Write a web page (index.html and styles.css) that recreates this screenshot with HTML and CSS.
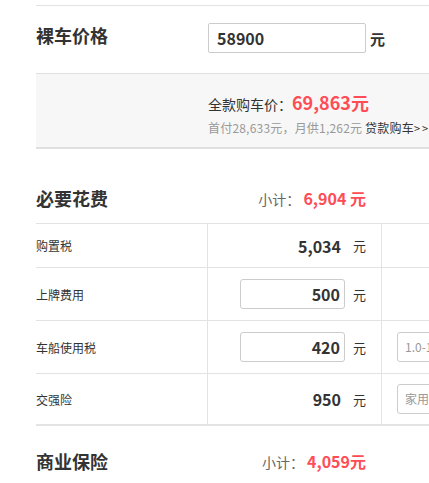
FILE: index.html
```html
<!DOCTYPE html>
<html>
<head>
    <title>购车计算器</title>
    <link rel="stylesheet" href="styles.css">
</head>
<body>
    <div id="calc">
        <div class="price-row">
            <div class="price-label">裸车价格</div>
            <div class="price-value">
                <input class="price-input" type="text" value="58900">
                <span class="unit-big">元</span>
            </div>
        </div>
        <div class="summary">
            <div class="summary-total">全款购车价：<span class="red-big">69,863元</span></div>
            <div class="summary-loan">首付28,633元，月供1,262元 <a class="loan-link">贷款购车<span class="arrows">&gt;&gt;</span></a></div>
        </div>

        <div class="section-head">
            <div class="section-title">必要花费</div>
            <div class="subtotal">小计： <span class="red">6,904 元</span></div>
        </div>
        <div class="fee-table">
            <div class="fee-row row-short">
                <div class="fee-name">购置税</div>
                <div class="fee-value"><span class="num">5,034</span><span class="unit">元</span></div>
                <div class="fee-extra"></div>
            </div>
            <div class="fee-row">
                <div class="fee-name">上牌费用</div>
                <div class="fee-value"><input class="fee-input" type="text" value="500"><span class="unit">元</span></div>
                <div class="fee-extra"></div>
            </div>
            <div class="fee-row">
                <div class="fee-name">车船使用税</div>
                <div class="fee-value"><input class="fee-input" type="text" value="420"><span class="unit">元</span></div>
                <div class="fee-extra"><div class="select-box">1.0-1.6L(含)</div></div>
            </div>
            <div class="fee-row row-last">
                <div class="fee-name">交强险</div>
                <div class="fee-value"><span class="num">950</span><span class="unit">元</span></div>
                <div class="fee-extra"><div class="select-box">家用6座以下</div></div>
            </div>
        </div>

        <div class="section-head section-low">
            <div class="section-title">商业保险</div>
            <div class="subtotal">小计： <span class="red">4,059元</span></div>
        </div>
    </div>
</body>
</html>
```

FILE: styles.css
```css
body {
    margin: 0;
    padding: 0;
    overflow: hidden;
    background-color: #fff;
    color: #333;
    font-family: "Noto Sans CJK SC", "Open Sans", sans-serif;
}
#calc {
    width: 600px;
    margin-left: 36px;
    padding-top: 5px;
}
.price-row {
    display: flex;
    align-items: flex-start;
    height: 67px;
    border-top: 1px solid #e3e3e3;
}
.price-label {
    width: 172px;
    margin-top: 18px;
    font-size: 18px;
    font-weight: bold;
    line-height: 22px;
}
.price-value {
    display: flex;
    align-items: center;
    margin-top: 17px;
}
.price-input {
    box-sizing: border-box;
    width: 158px;
    height: 30px;
    border: 1px solid #ccc;
    border-radius: 2px;
    padding: 0 8px;
    font-family: inherit;
    font-size: 16px;
    font-weight: bold;
    color: #333;
    outline: none;
}
.unit-big {
    margin-left: 4px;
    font-size: 15px;
    font-weight: bold;
}
.summary {
    background-color: #f7f7f7;
    border-top: 1px solid #e0e0e0;
    border-bottom: 2px solid #e0e0e0;
    height: 76px;
    padding-left: 172px;
    box-sizing: border-box;
    padding-top: 15px;
}
.summary-total {
    font-size: 14px;
    line-height: 26px;
    white-space: nowrap;
}
.red-big {
    color: #ff4c55;
    font-size: 18px;
    font-weight: bold;
}
.summary-loan {
    font-size: 12px;
    letter-spacing: 0.2px;
    color: #999;
    line-height: 22px;
    white-space: nowrap;
}
.loan-link {
    color: #333;
}
.arrows {
    letter-spacing: 2px;
    font-size: 11px;
}
.section-head {
    display: flex;
    align-items: center;
    width: 330px;
    justify-content: space-between;
    margin-top: 34px;
    height: 30px;
    margin-bottom: 10px;
}
.section-low {
    margin-top: 20px;
}
.section-title {
    font-size: 18px;
    font-weight: bold;
}
.subtotal {
    font-size: 14px;
    color: #666;
}
.red {
    color: #ff4c55;
    font-size: 16px;
    font-weight: bold;
}
.fee-table {
    border-top: 1px solid #e3e3e3;
    border-bottom: 2px solid #e3e3e3;
}
.fee-row {
    display: flex;
    height: 52px;
    border-top: 1px solid #e3e3e3;
}
.fee-row:first-child {
    border-top: none;
}
.row-short {
    height: 43px;
}
.row-last {
    height: 50px;
}
.fee-name {
    width: 171px;
    display: flex;
    align-items: center;
    font-size: 12px;
}
.fee-value {
    width: 158px;
    padding-right: 15px;
    display: flex;
    align-items: center;
    justify-content: flex-end;
    border-left: 1px solid #e3e3e3;
    border-right: 1px solid #e3e3e3;
}
.num {
    font-size: 16px;
    font-weight: bold;
    margin-right: 4px;
}
.unit {
    font-size: 13px;
    margin-left: 8px;
}
.fee-input {
    box-sizing: border-box;
    width: 105px;
    height: 30px;
    border: 1px solid #ccc;
    border-radius: 3px;
    padding: 0 4px;
    text-align: right;
    font-family: inherit;
    font-size: 16px;
    font-weight: bold;
    color: #333;
    outline: none;
}
.fee-extra {
    flex: 1;
    display: flex;
    align-items: center;
    padding-left: 15px;
}
.select-box {
    box-sizing: border-box;
    width: 140px;
    height: 30px;
    line-height: 28px;
    border: 1px solid #ccc;
    border-radius: 3px;
    padding-left: 7px;
    font-size: 12px;
    color: #999;
}
```
